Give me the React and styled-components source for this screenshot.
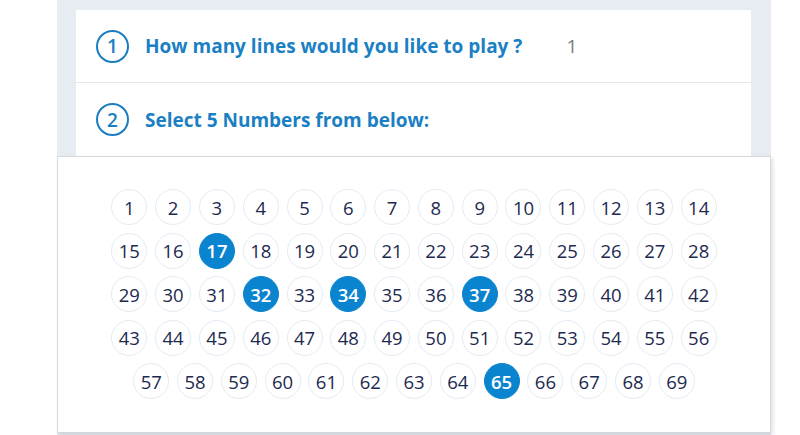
import React from "react";
import styled, { createGlobalStyle } from "styled-components";

const SELECTED = [17, 32, 34, 37, 65];
const NUMBERS = Array.from({ length: 69 }, (_, i) => i + 1);

const GlobalStyle = createGlobalStyle`
  html, body {
    margin: 0;
    padding: 0;
    background: #ffffff;
  }
  body {
    font-family: "Open Sans", "Liberation Sans", sans-serif;
  }
`;

function App() {
  return (
    <>
      <GlobalStyle />
      <Column>
        <Panel>
          <Card>
            <Step>
              <StepNumber>1</StepNumber>
              <StepTitle>How many lines would you like to play ?</StepTitle>
              <StepValue>1</StepValue>
            </Step>
            <Step>
              <StepNumber>2</StepNumber>
              <StepTitle>Select 5 Numbers from below:</StepTitle>
            </Step>
          </Card>
        </Panel>
        <Picker>
          <BallGrid>
            {NUMBERS.map((n) => (
              <Ball key={n} $active={SELECTED.includes(n)}>
                {n}
              </Ball>
            ))}
          </BallGrid>
        </Picker>
      </Column>
    </>
  );
}

const Column = styled.div`
  margin-left: 57px;
  width: 714px;
  height: 435px;
  display: flex;
  flex-direction: column;
  background: #e6ecf2;
`;

const Panel = styled.div`
  padding: 10px 20px 0 19px;
`;

const Card = styled.div`
  background: #ffffff;
  display: flex;
  flex-direction: column;
`;

const Step = styled.div`
  height: 72px;
  display: flex;
  align-items: center;
  padding-left: 20px;

  & + & {
    border-top: 1px solid #e4e7ea;
    height: 73px;
  }
`;

const StepNumber = styled.div`
  width: 33px;
  height: 33px;
  box-sizing: border-box;
  border: 2px solid #1b7dc1;
  border-radius: 50%;
  display: flex;
  align-items: center;
  justify-content: center;
  color: #1b7dc1;
  font-size: 19px;
  font-weight: 600;
  margin-right: 16px;
`;

const StepTitle = styled.div`
  color: #1b7fc3;
  font-size: 19px;
  font-weight: 700;
`;

const StepValue = styled.div`
  color: #7a7a7a;
  font-size: 19px;
  margin-left: 44px;
`;

const Picker = styled.div`
  flex: 1;
  background: #ffffff;
  border: 1px solid #d6d9dc;
  box-shadow: 2px 2px 4px rgba(0, 0, 0, 0.12);
  margin-bottom: 2px;
  display: flex;
  justify-content: center;
  padding-top: 32px;
  box-sizing: border-box;
`;

const BallGrid = styled.div`
  width: 610px;
  display: flex;
  flex-wrap: wrap;
  justify-content: center;
  align-content: flex-start;
  column-gap: 7.8px;
  row-gap: 7.5px;
`;

const Ball = styled.div`
  width: 36px;
  height: 36px;
  box-sizing: border-box;
  border-radius: 50%;
  border: 1px solid ${(p) => (p.$active ? "#0b84cf" : "#e2ebf3")};
  background: ${(p) => (p.$active ? "#0b84cf" : "#ffffff")};
  color: ${(p) => (p.$active ? "#ffffff" : "#1d2a4f")};
  font-weight: ${(p) => (p.$active ? 600 : 400)};
  font-size: 18.5px;
  display: flex;
  align-items: center;
  justify-content: center;
`;

export default App;
